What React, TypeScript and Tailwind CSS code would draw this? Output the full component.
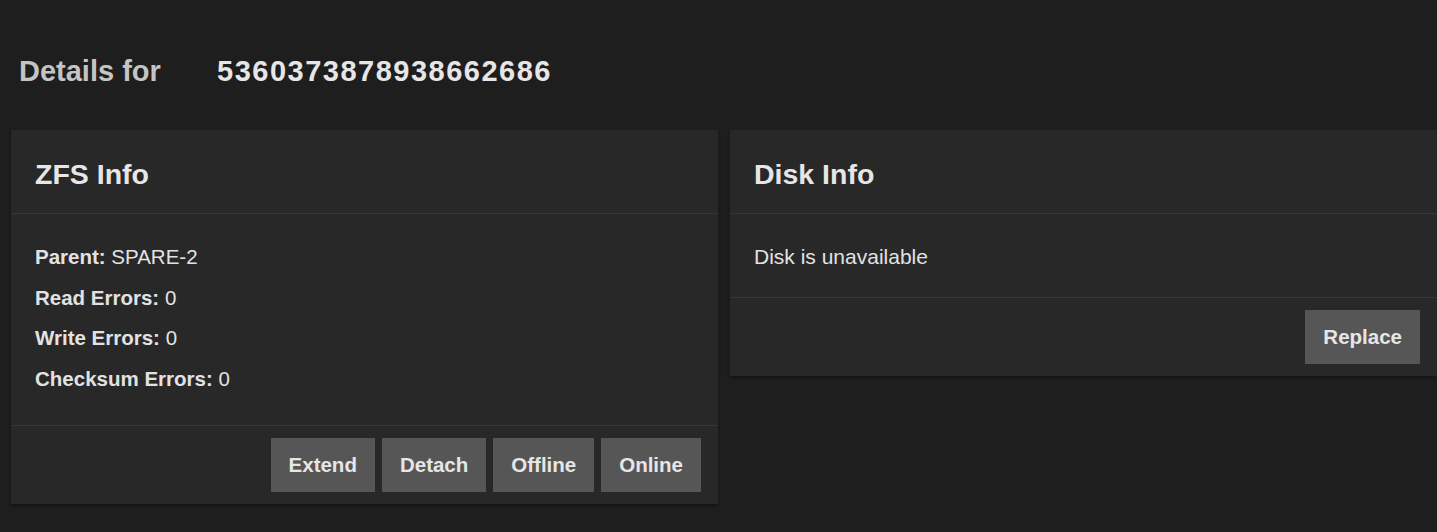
import React from "react";

const font = { fontFamily: '"Liberation Sans", Arial, sans-serif' };

function Button({ label }: { label: string }) {
  return (
    <button className="h-[54px] bg-[#565656] px-[18px] text-[20.5px] font-bold text-[#e6e6e6]">
      {label}
    </button>
  );
}

function Row({ label, value }: { label: string; value: string }) {
  return (
    <div className="h-[40.5px] leading-[40px] text-[20.5px] text-[#e2e2e2]">
      <span className="font-bold">{label}:</span> <span>{value}</span>
    </div>
  );
}

function Card({
  title,
  children,
  actions,
  bodyClass,
}: {
  title: string;
  children: React.ReactNode;
  actions: string[];
  bodyClass: string;
}) {
  return (
    <section className="flex flex-col bg-[#282828] shadow-[0_2px_3px_rgba(0,0,0,0.35)]">
      <header className="border-b border-[#363636] px-6 pt-[27px] pb-[22px]">
        <h2 className="text-[28.5px] font-bold leading-[34px] text-[#e6e6e6]">{title}</h2>
      </header>
      <div className={`px-6 ${bodyClass}`}>{children}</div>
      <footer className="flex justify-end gap-[7px] border-t border-[#363636] pt-3 pb-3 pr-[17px]">
        {actions.map((a) => (
          <Button key={a} label={a} />
        ))}
      </footer>
    </section>
  );
}

export default function App() {
  return (
    <div className="min-h-[532px] w-full overflow-hidden bg-[#1e1e1e]" style={font}>
      <div className="flex items-baseline pl-[19px] pt-[54px] pb-[42px] text-[29px] font-bold leading-[34px]">
        <span className="w-[198px] text-[#c4c4c4]">Details for</span>
        <span className="tracking-[1.5px] text-[#e6e6e6]">5360373878938662686</span>
      </div>
      <div className="grid grid-cols-[707px_707px] items-start gap-[12px] pl-[11px]">
        <Card
          title="ZFS Info"
          actions={["Extend", "Detach", "Offline", "Online"]}
          bodyClass="pt-[23px] pb-[26px]"
        >
          <Row label="Parent" value="SPARE-2" />
          <Row label="Read Errors" value="0" />
          <Row label="Write Errors" value="0" />
          <Row label="Checksum Errors" value="0" />
        </Card>
        <Card title="Disk Info" actions={["Replace"]} bodyClass="pt-[23px] pb-[20px]">
          <div className="h-[40px] leading-[40px] text-[21px] text-[#e2e2e2]">Disk is unavailable</div>
        </Card>
      </div>
    </div>
  );
}
